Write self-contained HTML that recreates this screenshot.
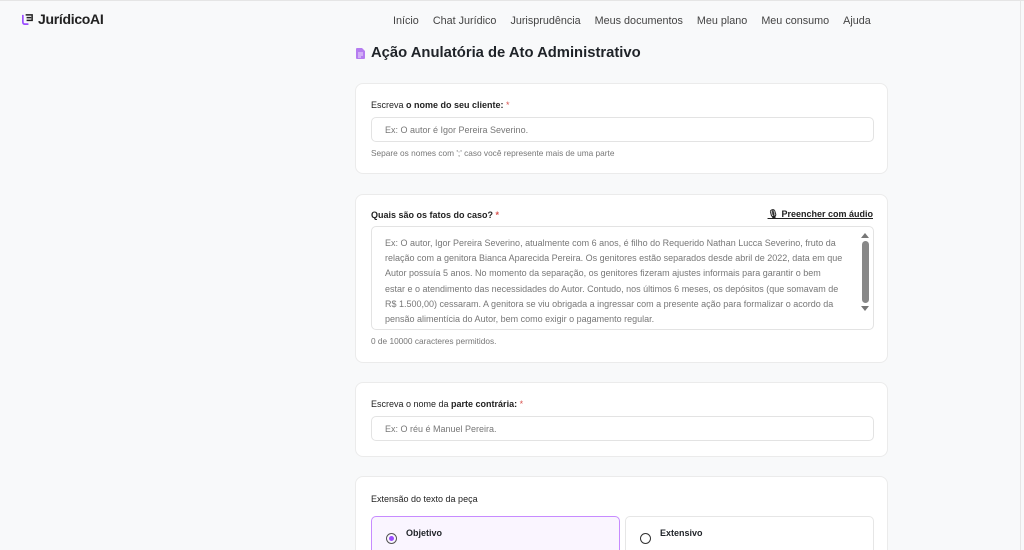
<!DOCTYPE html>
<html style="overflow:hidden;width:1024px;height:550px"><head><meta charset="utf-8"><style>
*{box-sizing:border-box;margin:0;padding:0}
body{width:1024px;height:550px;overflow:hidden;background:#f8f9fa;font-family:"Liberation Sans",sans-serif;color:#1f2328;position:relative}
.tb{position:absolute;left:0;top:0;width:1024px;height:1px;background:#e5e5e5}
.rb{position:absolute;right:3px;top:0;width:1px;height:550px;background:#e6e6e6}
.logo{position:absolute;left:21px;top:11px;font-size:14px;font-weight:bold;color:#222;display:flex;align-items:center;gap:4px;letter-spacing:-0.3px}
nav{position:absolute;left:393px;top:15px;font-size:10.8px;color:#444}
nav span{margin-right:14px}
h1{position:absolute;left:356px;top:45px;font-size:14.8px;font-weight:bold;display:flex;align-items:center;gap:6px}
.card{position:absolute;left:355px;width:533px;background:#fff;border:1px solid #ebebeb;border-radius:8px}
.lbl{position:absolute;left:15px;font-size:9px;color:#222}
.req{color:#d9534f}
.inp{position:absolute;left:15px;width:503px;border:1px solid #e3e3e3;border-radius:5px;font-size:9px;color:#777;padding-left:13px;display:flex;align-items:center}
.hint{position:absolute;left:15px;font-size:8.3px;color:#777}
.ta{position:absolute;left:15px;width:503px;height:104px;border:1px solid #e3e3e3;border-radius:5px;font-size:9px;color:#777;padding:9px 30px 0 13px;line-height:15.2px;overflow:hidden}
.sb{position:absolute;right:3px;top:2px;width:10px;height:98px}
.opt{position:absolute;top:39px;height:40px;border-radius:5px;font-size:9px;font-weight:bold}
</style></head><body>
<div class="tb"></div>
<div class="rb"></div>
<div class="logo"><svg width="13" height="13" viewBox="0 0 14 14"><path d="M2 2v8a2 2 0 0 0 2 2h4" stroke="#9b4dff" stroke-width="1.8" fill="none"/><path d="M5 2h7v6H6M6 5h5" stroke="#222" stroke-width="1.6" fill="none"/></svg>JurídicoAI</div>
<nav><span>Início</span><span>Chat Jurídico</span><span>Jurisprudência</span><span>Meus documentos</span><span>Meu plano</span><span>Meu consumo</span><span>Ajuda</span></nav>
<h1><svg width="9" height="11" viewBox="0 0 9 11"><path d="M0 1a1 1 0 0 1 1-1h5l3 3v7a1 1 0 0 1-1 1H1a1 1 0 0 1-1-1z" fill="#b57cf0"/><path d="M2 5h5M2 7h5M2 9h3" stroke="#fff" stroke-width=".8"/></svg>Ação Anulatória de Ato Administrativo</h1>

<div class="card" style="top:83px;height:91px">
<div class="lbl" style="top:16px">Escreva <b>o nome do seu cliente:</b> <span class="req">*</span></div>
<div class="inp" style="top:33px;height:25px">Ex: O autor é Igor Pereira Severino.</div>
<div class="hint" style="top:64px">Separe os nomes com ';' caso você represente mais de uma parte</div>
</div>

<div class="card" style="top:194px;height:169px">
<div class="lbl" style="top:15px;font-weight:bold">Quais são os fatos do caso? <span class="req">*</span></div>
<div style="position:absolute;right:14px;top:14px;font-size:9px;font-weight:bold;text-decoration:underline;color:#222">🎙&nbsp;Preencher com áudio</div>
<div class="ta" style="top:31px">Ex: O autor, Igor Pereira Severino, atualmente com 6 anos, é filho do Requerido Nathan Lucca Severino, fruto da relação com a genitora Bianca Aparecida Pereira. Os genitores estão separados desde abril de 2022, data em que Autor possuía 5 anos. No momento da separação, os genitores fizeram ajustes informais para garantir o bem estar e o atendimento das necessidades do Autor. Contudo, nos últimos 6 meses, os depósitos (que somavam de R$ 1.500,00) cessaram. A genitora se viu obrigada a ingressar com a presente ação para formalizar o acordo da pensão alimentícia do Autor, bem como exigir o pagamento regular.
<div class="sb"><div style="width:0;height:0;border:4px solid transparent;border-bottom:5px solid #777;margin:0 auto"></div><div style="width:7px;height:62px;background:#888;border-radius:4px;margin:3px auto"></div><div style="width:0;height:0;border:4px solid transparent;border-top:5px solid #777;margin:0 auto"></div></div></div>
<div class="hint" style="top:141px">0 de 10000 caracteres permitidos.</div>
</div>

<div class="card" style="top:382px;height:75px">
<div class="lbl" style="top:16px">Escreva o nome da <b>parte contrária:</b> <span class="req">*</span></div>
<div class="inp" style="top:33px;height:25px">Ex: O réu é Manuel Pereira.</div>
</div>

<div class="card" style="top:476px;height:90px">
<div class="lbl" style="top:17px">Extensão do texto da peça</div>
<div class="opt" style="left:15px;width:249px;background:#faf5ff;border:1px solid #c78bff"><span style="position:absolute;left:14px;top:16px;width:11px;height:11px;border:1.5px solid #555;border-radius:50%"><span style="position:absolute;left:1.5px;top:1.5px;width:5px;height:5px;background:#9b4dff;border-radius:50%"></span></span><span style="position:absolute;left:34px;top:11px">Objetivo</span></div>
<div class="opt" style="left:269px;width:249px;border:1px solid #e6e6e6"><span style="position:absolute;left:14px;top:16px;width:11px;height:11px;border:1.5px solid #333;border-radius:50%"></span><span style="position:absolute;left:34px;top:11px">Extensivo</span></div>
</div>
</body></html>
